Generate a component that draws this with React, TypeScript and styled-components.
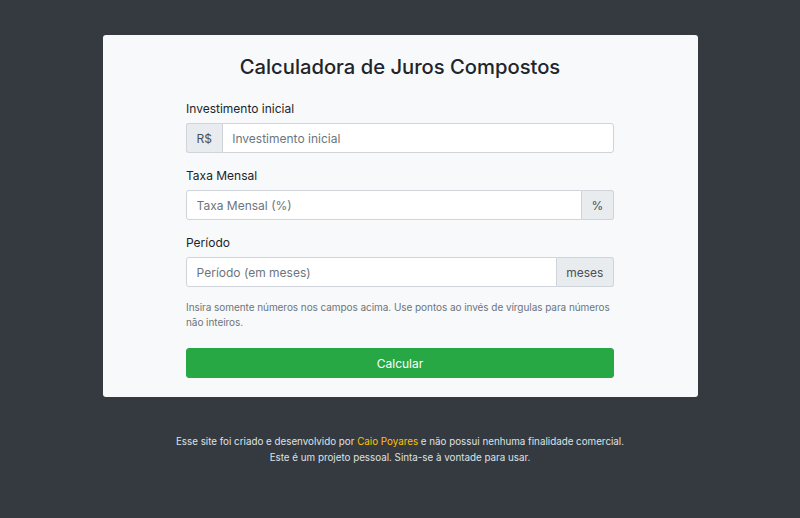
import React, { FC } from 'react'
import styled, { createGlobalStyle } from 'styled-components'

const GlobalStyle = createGlobalStyle`
  html, body {
    margin: 0;
    padding: 0;
    background-color: #343a40;
  }
  body {
    font-family: Inter, "Noto Sans", "Liberation Sans", sans-serif;
    font-size: 12px;
    color: #212529;
  }
`

const Page = styled('main')`
  min-height: 518px;
  padding-top: 35px;
  box-sizing: border-box;
  display: flex;
  flex-direction: column;
  align-items: center;
`

const Card = styled('section')`
  width: 595px;
  box-sizing: border-box;
  background-color: #f8f9fa;
  border-radius: 3px;
  padding: 18px 0 19px;
  display: flex;
  flex-direction: column;
  align-items: center;
`

const Title = styled('h3')`
  margin: 0 0 19px;
  font-size: 20.2px;
  font-weight: 500;
  line-height: 27px;
  color: #212529;
`

const Form = styled('form')`
  width: 428px;
  display: flex;
  flex-direction: column;
`

const Group = styled('div')`
  display: flex;
  flex-direction: column;
  margin-bottom: 13px;
`

const Label = styled('label')`
  display: block;
  line-height: 19px;
  margin-bottom: 5px;
`

const InputGroup = styled('div')`
  display: flex;
  height: 30px;
`

const Addon = styled('span')<{ side: 'left' | 'right' }>`
  display: flex;
  align-items: center;
  padding: 0 9.6px;
  background-color: #e9ecef;
  border: 1px solid #ced4da;
  color: #495057;
  border-radius: ${p => (p.side === 'left' ? '3px 0 0 3px' : '0 3px 3px 0')};
  ${p => (p.side === 'left' ? 'border-right: 0;' : 'border-left: 0;')}
`

const Input = styled('input')<{ rounded: 'left' | 'right' }>`
  flex: 1;
  min-width: 0;
  box-sizing: border-box;
  height: 30px;
  padding: 0 9.6px;
  border: 1px solid #ced4da;
  background-color: #fff;
  font-family: inherit;
  font-size: 12px;
  color: #495057;
  border-radius: ${p => (p.rounded === 'left' ? '3px 0 0 3px' : '0 3px 3px 0')};
  outline: none;
  &::placeholder {
    color: #6c757d;
  }
`

const Hint = styled('small')`
  display: block;
  font-size: 10px;
  letter-spacing: -0.06px;
  line-height: 15px;
  color: #6c757d;
  margin-bottom: 18px;
`

const Button = styled('button')`
  height: 30px;
  border: 1px solid #28a745;
  border-radius: 3px;
  background-color: #28a745;
  color: #fff;
  font-family: inherit;
  font-size: 12px;
  cursor: pointer;
`

const Footer = styled('footer')`
  margin-top: 37px;
  text-align: center;
  font-size: 9.8px;
  line-height: 16px;
  color: #dfe1e4;
`

const Link = styled('a')`
  color: #ffc107;
  text-decoration: none;
`

const App: FC = () => (
  <>
    <GlobalStyle />
    <Page>
      <Card>
        <Title>Calculadora de Juros Compostos</Title>
        <Form onSubmit={e => e.preventDefault()}>
          <Group>
            <Label>Investimento inicial</Label>
            <InputGroup>
              <Addon side="left">R$</Addon>
              <Input rounded="right" placeholder="Investimento inicial" />
            </InputGroup>
          </Group>
          <Group>
            <Label>Taxa Mensal</Label>
            <InputGroup>
              <Input rounded="left" placeholder="Taxa Mensal (%)" />
              <Addon side="right">%</Addon>
            </InputGroup>
          </Group>
          <Group>
            <Label>Período</Label>
            <InputGroup>
              <Input rounded="left" placeholder="Período (em meses)" />
              <Addon side="right">meses</Addon>
            </InputGroup>
          </Group>
          <Hint>
            Insira somente números nos campos acima. Use pontos ao invés de vírgulas para números
            não inteiros.
          </Hint>
          <Button type="submit">Calcular</Button>
        </Form>
      </Card>
      <Footer>
        Esse site foi criado e desenvolvido por <Link href="#">Caio Poyares</Link> e não possui
        nenhuma finalidade comercial.
        <br />
        Este é um projeto pessoal. Sinta-se à vontade para usar.
      </Footer>
    </Page>
  </>
)

export default App
